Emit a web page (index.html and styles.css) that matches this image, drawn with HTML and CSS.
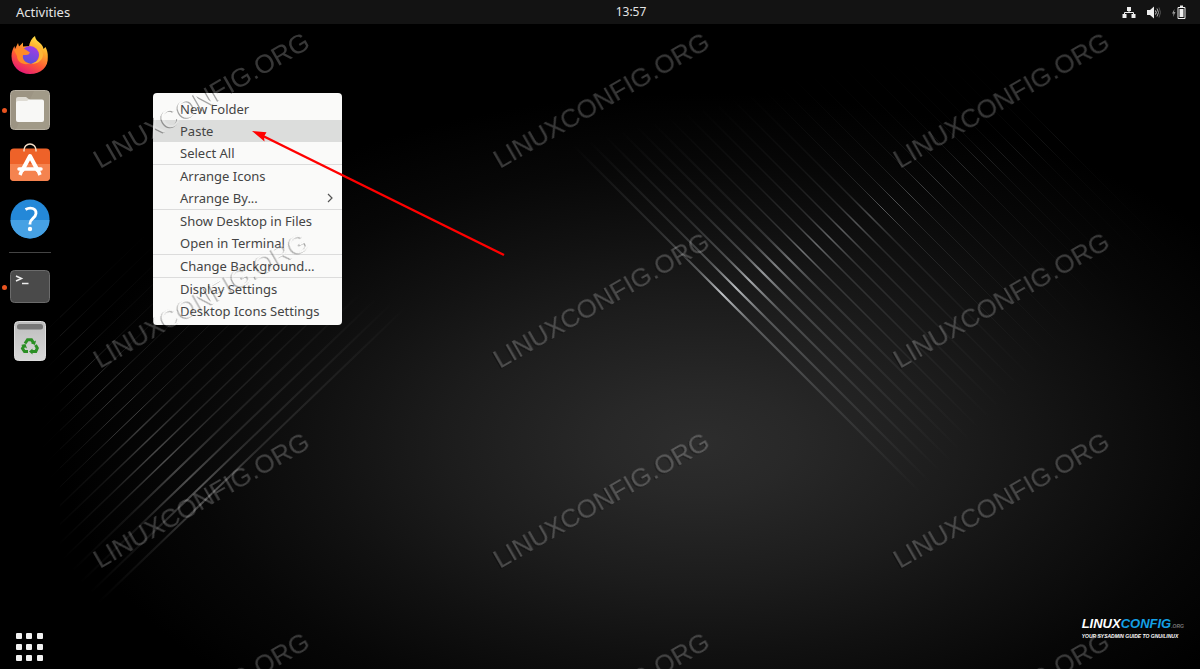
FILE: index.html
```html
<!DOCTYPE html>
<html lang="en">
<head>
<meta charset="utf-8">
<meta name="viewport" content="width=device-width, initial-scale=1">
<title>Desktop</title>
<link rel="stylesheet" href="styles.css">
</head>
<body>
<div class="desktop">
  <svg class="layer" viewBox="0 0 1200 669" preserveAspectRatio="xMidYMid slice" aria-hidden="true">
    <defs>
      <radialGradient id="glow" gradientUnits="userSpaceOnUse" cx="0" cy="0" r="1" gradientTransform="translate(700 443) scale(640 350)">
        <stop offset="0" stop-color="#2d2d2d"/>
        <stop offset=".15" stop-color="#282828"/>
        <stop offset=".4" stop-color="#1c1c1c"/>
        <stop offset=".6" stop-color="#111"/>
        <stop offset=".8" stop-color="#070707"/>
        <stop offset="1" stop-color="#000"/>
      </radialGradient>
      <linearGradient id="ray" x1="0" y1="0" x2="1" y2="1">
        <stop offset="0" stop-color="#aeb2b5" stop-opacity="0"/>
        <stop offset=".25" stop-color="#aeb2b5" stop-opacity=".18"/>
        <stop offset=".36" stop-color="#aeb2b5" stop-opacity=".42"/>
        <stop offset=".43" stop-color="#d4d8dc" stop-opacity=".9"/>
        <stop offset=".52" stop-color="#aeb2b5" stop-opacity=".42"/>
        <stop offset=".75" stop-color="#aeb2b5" stop-opacity=".16"/>
        <stop offset="1" stop-color="#aeb2b5" stop-opacity="0"/>
      </linearGradient>
      <linearGradient id="ray2" x1="0" y1="1" x2="1" y2="0">
        <stop offset="0" stop-color="#aaa" stop-opacity="0"/>
        <stop offset=".2" stop-color="#aaa" stop-opacity=".15"/>
        <stop offset=".36" stop-color="#bbb" stop-opacity=".5"/>
        <stop offset=".52" stop-color="#aaa" stop-opacity=".22"/>
        <stop offset="1" stop-color="#aaa" stop-opacity="0"/>
      </linearGradient>
    </defs>
    <rect width="1200" height="669" fill="#000"/>
    <rect width="1200" height="669" fill="url(#glow)"/>
    <g stroke="url(#ray)" fill="none">
      <g stroke-width="2">
        <path d="M573 145l347 347"/><path d="M589 141l341 341" opacity=".95"/><path d="M605 136l335 335" opacity=".85"/>
        <path d="M621 131l330 330" opacity=".75"/><path d="M636 126l324 324" opacity=".62"/><path d="M652 122l319 319" opacity=".54"/>
      </g>
      <g stroke-width="1.5">
        <path d="M668 117l313 313" opacity=".56"/><path d="M684 112l308 308" opacity=".52"/><path d="M699 107l302 302" opacity=".48"/>
        <path d="M715 103l296 296" opacity=".44"/><path d="M731 98l291 291" opacity=".4"/><path d="M747 93l285 285" opacity=".36"/>
      </g>
      <g stroke-width="1">
        <path d="M762 88l280 280" opacity=".45"/><path d="M778 84l274 274" opacity=".4"/><path d="M794 79l269 269" opacity=".34"/>
        <path d="M810 74l263 263" opacity=".3"/><path d="M825 69l258 258" opacity=".26"/><path d="M841 65l252 252" opacity=".23"/>
        <path d="M857 60l247 247" opacity=".2"/><path d="M873 55l241 241" opacity=".18"/><path d="M888 58l236 236" opacity=".16"/>
        <path d="M904 56l230 230" opacity=".14"/><path d="M920 54l225 225" opacity=".12"/><path d="M936 52l219 219" opacity=".1"/>
        <path d="M951 50l214 214" opacity=".09"/><path d="M967 48l208 208" opacity=".08"/>
      </g>
    </g>
    <g stroke="url(#ray2)" fill="none">
      <g stroke-width="2">
        <path d="M98 603L406 307" opacity=".85"/><path d="M90 593L392 303" opacity=".85"/><path d="M80 583L377 298" opacity=".8"/><path d="M72 571L362 292" opacity=".7"/>
      </g>
      <g stroke-width="1.5">
        <path d="M63 559L347 286" opacity=".8"/><path d="M57 546L332 282" opacity=".75"/><path d="M52 532L317 278" opacity=".65"/><path d="M46 519L302 273" opacity=".6"/>
      </g>
      <g stroke-width="1">
        <path d="M40 506L287 269" opacity=".75"/><path d="M36 491L272 265" opacity=".65"/><path d="M31 477L257 260" opacity=".6"/>
        <path d="M27 462L242 256" opacity=".55"/><path d="M22 448L227 251" opacity=".45"/><path d="M18 433L212 247" opacity=".4"/>
        <path d="M14 418L197 242" opacity=".35"/><path d="M10 403L182 238" opacity=".3"/><path d="M6 388L167 233" opacity=".25"/>
        <path d="M2 373L152 229" opacity=".2"/>
      </g>
    </g>
  </svg>

  <header class="topbar">
    <button class="bar-button">Activities</button>
    <button class="bar-button clock">13:57</button>
    <button class="bar-button tray" aria-label="System menu">
      <svg width="14" height="13" viewBox="0 0 14 13"><path d="M5 1h4v4H5zM0.500 8h4v4h-4zM9.500 8h4v4h-4z" fill="#eee"/><path d="M7 5v2M2.500 8.500V6.500h9v2" stroke="#eee" fill="none"/></svg>
      <svg width="14" height="13" viewBox="0 0 14 13"><path d="M0 4h3l4-3.500v12L3 9H0z" fill="#eee"/><path d="M8.500 4.500q1.500 2 0 4" stroke="#ddd" fill="none"/><path d="M10 2.500q3 4 0 8" stroke="#aaa" fill="none"/><path d="M12 1.500q3 5 0 10" stroke="#555" fill="none"/></svg>
      <svg width="14" height="15" viewBox="0 0 14 15"><path d="M2.500 4L0 8.500h1.500L1 12l2.500-5H2z" fill="#999"/><path d="M6 2.500h7v11H6z" fill="none" stroke="#eee"/><path d="M8 .5h3v2H8zM7.500 4h4v8h-4z" fill="#eee"/></svg>
    </button>
  </header>

  <main class="workspace">
    <nav class="dock" aria-label="Dock">
      <button class="app" aria-label="Firefox">
        <svg viewBox="0 0 40 40">
          <defs>
            <linearGradient id="fx" x1=".8" y1="0" x2=".3" y2="1"><stop offset="0" stop-color="#fff04a"/><stop offset=".35" stop-color="#ffa52b"/><stop offset=".65" stop-color="#ff5a35"/><stop offset="1" stop-color="#e3157a"/></linearGradient>
            <linearGradient id="fp" x1=".7" y1="0" x2=".3" y2="1"><stop offset="0" stop-color="#a33be6"/><stop offset="1" stop-color="#5553d8"/></linearGradient>
          </defs>
          <path d="M20 38C9 38 1.500 30 1.500 20c0-4 1.500-7.500 3-10L5 13l3-6 1 3.500 4-4v4q3-.5 6-.2C19.500 6 22 2 25 0c.5 4 3 5 6 8 1.500 1.500 2 3 2.500 5l2-2c1.500 3 2.500 6 2.300 10C38.500 31 31 38 20 38z" fill="url(#fx)"/>
          <circle cx="20" cy="19" r="9" fill="url(#fp)"/>
          <path d="M4 14c3-2 6-2.500 9-2l7 4.500q-1 2.500-4 2.500h-3c-1 5 3 8.500 8 8-6 3-14 0-14-7z" fill="#ff8a28"/>
          <path d="M25 11c3 1.500 5 5 4 10-1 4-4 6-8 6.500 6 1 12-3 12-9 0-4-4-8-8-7.500z" fill="#ffb637"/>
        </svg>
      </button>
      <button class="app running" aria-label="Files">
        <svg viewBox="0 0 40 40"><rect x=".5" y=".5" width="39" height="39" rx="4" fill="#9c9483" stroke="#b7b0a2"/><path d="M24 1h11q4 0 4 4v30q0 4-4 4H6z" fill="#aaa292" opacity=".4"/><path d="M6 9q0-2 2-2h8l4 3v5H6z" fill="#dedbd3"/><path d="M6 13q0-2 2-2h9l2-1.500h13q2 0 2 2V30q0 2-2 2H8q-2 0-2-2z" fill="#f8f8f6"/></svg>
      </button>
      <button class="app" aria-label="Software">
        <svg viewBox="0 0 40 40"><rect y="4.500" width="40" height="32.500" rx="4" fill="#ee6229"/><path d="M0 20h40v13q0 4-4 4H4q-4 0-4-4z" fill="#f5834f"/><path d="M14 7.500V6a6 6 0 0 1 12 0v1.500" fill="none" stroke="#f4ddc6" stroke-width="1.500"/><path d="M12 27l8-15 8 15" fill="none" stroke="#fff" stroke-width="4" stroke-linejoin="round"/><path d="M9 25h22" stroke="#fff" stroke-width="3.500" stroke-linecap="round"/><path d="M12 26l-2 5M28 26l2 5" stroke="#fff" stroke-width="3.500"/></svg>
      </button>
      <button class="app" aria-label="Help">
        <svg viewBox="0 0 40 40"><circle cx="20" cy="21" r="19.500" fill="#2488d8"/><path d="M.5 22h39a19.500 18.500 0 0 1-39 0z" fill="#46a1e4"/><path d="M15.500 11.500c5-3 11-1 10.500 4-.5 5-6 5-6 10v1" fill="none" stroke="#fff" stroke-width="2.800"/><circle cx="20" cy="31" r="2.200" fill="#fff"/></svg>
      </button>
      <hr class="divider">
      <button class="app running" aria-label="Terminal">
        <svg viewBox="0 0 40 40"><rect x=".5" y="3.500" width="39" height="32" rx="4" fill="#4a4a4a" stroke="#6b6b6b"/><path d="M6 9l5.500 2.500L6 14" fill="none" stroke="#eee" stroke-width="1.500"/><path d="M12 16.500h6.500" stroke="#eee" stroke-width="1.500"/></svg>
      </button>
      <button class="app" aria-label="Trash">
        <svg viewBox="0 0 40 40"><defs><linearGradient id="bin" x2="0" y2="1"><stop stop-color="#bdbdbd"/><stop offset="1" stop-color="#d8d8d8"/></linearGradient></defs><rect x="4.500" y=".5" width="31" height="39" rx="4" fill="url(#bin)" stroke="#ddd"/><rect x="7" y="3" width="26" height="5.500" rx="2.500" fill="#777"/>
          <g fill="none" stroke="#2b8f24" stroke-width="3"><path d="M15 22.500l2.500-3.700h4l2 3"/><path d="M25.500 24l1.800 3-1.500 3.500h-4"/><path d="M18 30.500h-3.500l-2-3 1.800-3.200"/></g>
          <path d="M26 19.500l-1 4.500-4-1.800zM22.500 27.500v6l-3.500-3zM11 24l4.500-1 1.500 4.500z" fill="#2b8f24"/></svg>
      </button>
      <button class="show-apps" aria-label="Show Applications">
        <svg width="28" height="28" viewBox="0 0 28 28" fill="#f2f2f2"><rect x="0" y="0" width="6" height="6" rx="1"/><rect x="10" y="0" width="6" height="6" rx="1"/><rect x="21" y="0" width="6" height="6" rx="1"/><rect x="0" y="11" width="6" height="6" rx="1"/><rect x="10" y="11" width="6" height="6" rx="1"/><rect x="21" y="11" width="6" height="6" rx="1"/><rect x="0" y="22" width="6" height="6" rx="1"/><rect x="10" y="22" width="6" height="6" rx="1"/><rect x="21" y="22" width="6" height="6" rx="1"/></svg>
      </button>
    </nav>

    <div class="menu" role="menu">
      <button class="item" role="menuitem">New Folder</button>
      <button class="item selected" role="menuitem">Paste</button>
      <button class="item" role="menuitem">Select All</button>
      <hr class="rule">
      <button class="item" role="menuitem">Arrange Icons</button>
      <button class="item" role="menuitem">Arrange By...
        <svg width="6" height="10" viewBox="0 0 6 10"><path d="M1 1l4 4-4 4" fill="none" stroke="#555" stroke-width="1.200"/></svg>
      </button>
      <hr class="rule">
      <button class="item" role="menuitem">Show Desktop in Files</button>
      <button class="item" role="menuitem">Open in Terminal</button>
      <hr class="rule">
      <button class="item" role="menuitem">Change Background…</button>
      <hr class="rule">
      <button class="item" role="menuitem">Display Settings</button>
      <button class="item" role="menuitem">Desktop Icons Settings</button>
    </div>

    <div class="brand">
      <p class="brand-name">LINUX<span class="brand-blue">CONFIG</span><span class="brand-tld">.ORG</span></p>
      <p class="brand-tag">YOUR SYSADMIN GUIDE TO GNU/LINUX</p>
    </div>
  </main>

  <svg class="layer overlay" viewBox="0 0 1200 669" preserveAspectRatio="xMidYMid slice">
    <defs>
      <filter id="emboss" filterUnits="userSpaceOnUse" x="0" y="0" width="1200" height="669" color-interpolation-filters="sRGB">
        <feOffset in="SourceAlpha" dx="-1" dy="1" result="moved"/>
        <feComposite in="moved" in2="SourceAlpha" operator="out" result="edge"/>
        <feComponentTransfer in="edge" result="shade"><feFuncA type="linear" slope=".35"/></feComponentTransfer>
        <feComponentTransfer in="SourceGraphic" result="face"><feFuncA type="linear" slope=".22"/></feComponentTransfer>
        <feMerge><feMergeNode in="shade"/><feMergeNode in="face"/></feMerge>
      </filter>
    </defs>
    <g class="stamp" filter="url(#emboss)">
      <text transform="translate(100 169) rotate(-30)">LINUXCONFIG.ORG</text>
      <text transform="translate(500 169) rotate(-30)">LINUXCONFIG.ORG</text>
      <text transform="translate(900 169) rotate(-30)">LINUXCONFIG.ORG</text>
      <text transform="translate(100 369) rotate(-30)">LINUXCONFIG.ORG</text>
      <text transform="translate(500 369) rotate(-30)">LINUXCONFIG.ORG</text>
      <text transform="translate(900 369) rotate(-30)">LINUXCONFIG.ORG</text>
      <text transform="translate(100 569) rotate(-30)">LINUXCONFIG.ORG</text>
      <text transform="translate(500 569) rotate(-30)">LINUXCONFIG.ORG</text>
      <text transform="translate(900 569) rotate(-30)">LINUXCONFIG.ORG</text>
      <text transform="translate(100 769) rotate(-30)">LINUXCONFIG.ORG</text>
      <text transform="translate(500 769) rotate(-30)">LINUXCONFIG.ORG</text>
      <text transform="translate(900 769) rotate(-30)">LINUXCONFIG.ORG</text>
    </g>
    <path d="M504 255L262 135.500" stroke="#f00" stroke-width="2.500"/>
    <path d="M252 131l14.500 1.200-2.500 4.300.5 5z" fill="#f00"/>
  </svg>
</div>
</body>
</html>
```
FILE: styles.css
```css
* {
  box-sizing: border-box;
}

body {
  margin: 0;
  background: #000;
  font-family: "Noto Sans", "Open Sans", sans-serif;
}

button {
  border: 0;
  padding: 0;
  background: none;
  color: inherit;
  font: inherit;
}

.desktop {
  position: relative;
  display: flex;
  flex-direction: column;
  min-height: 100vh;
  overflow: hidden;
}

.layer {
  position: absolute;
  inset: 0;
  width: 100%;
  height: 100%;
}

.overlay {
  pointer-events: none;
}

.topbar {
  position: relative;
  display: grid;
  grid-template-columns: 1fr auto 1fr;
  align-items: center;
  height: 24px;
  padding: 0 14px 0 16px;
  background: #131313;
  color: #e4e4e4;
  font-size: 13px;
  line-height: 16px;
}

.bar-button {
  justify-self: start;
}

.clock {
  margin-left: 60px;
  justify-self: center;
  font-size: 12px;
}

.tray {
  display: flex;
  align-items: center;
  gap: 11px;
  justify-self: end;
}

.workspace {
  position: relative;
  display: flex;
  flex: 1;
  align-items: flex-start;
}

.dock {
  display: flex;
  flex-direction: column;
  align-items: center;
  align-self: stretch;
  gap: 14px;
  width: 60px;
  padding: 12px 0 8px;
  background: rgba(0, 0, 0, 0.7);
}

.app {
  position: relative;
  width: 40px;
  height: 40px;
}

.app svg,
.show-apps svg {
  display: block;
  overflow: visible;
}

.running::before {
  content: "";
  position: absolute;
  top: 18px;
  left: -8px;
  width: 5px;
  height: 5px;
  border-radius: 50%;
  background: #e95420;
}

.divider {
  width: 42px;
  height: 1px;
  margin: 0;
  border: 0;
  background: #444;
}

.show-apps {
  margin-top: auto;
}

.menu {
  display: flex;
  flex-direction: column;
  width: 189px;
  margin: 69px 0 0 93px;
  padding: 5px 0 3px;
  border-radius: 4px;
  background: #fafaf9;
  color: #444;
  font-size: 13px;
  line-height: 22px;
}

.item {
  display: flex;
  align-items: center;
  justify-content: space-between;
  height: 22px;
  padding: 0 9px 0 27px;
  text-align: left;
}

.selected {
  background: #dcdddc;
}

.rule {
  width: 100%;
  height: 1px;
  margin: 0;
  border: 0;
  background: #dcdcdc;
}

.brand {
  align-self: flex-end;
  margin: 0 16px 29px auto;
  font-family: "Liberation Sans", Arial, sans-serif;
  font-style: italic;
  font-weight: bold;
  color: #fff;
}

.brand-name,
.brand-tag {
  margin: 0;
  white-space: nowrap;
}

.brand-name {
  font-size: 13px;
  line-height: 13px;
}

.brand-blue {
  color: #14a0e6;
}

.brand-tld {
  color: #777;
  font-size: 5px;
}

.brand-tag {
  font-size: 5px;
  line-height: 7px;
}

.stamp {
  fill: #fff;
  font-family: "Liberation Sans", Arial, sans-serif;
  font-size: 26px;
}
```
